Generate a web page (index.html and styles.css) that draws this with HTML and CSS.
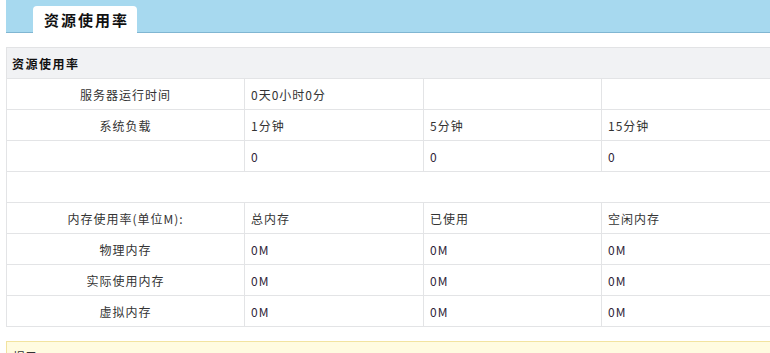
FILE: index.html
```html
<!DOCTYPE html>
<html>
<head>
<meta charset="utf-8">
<link rel="stylesheet" href="styles.css">
</head>
<body>
<div class="page">
  <div class="topbar">
    <div class="tab">资源使用率</div>
  </div>
  <div class="panel">
    <div class="panel-head">资源使用率</div>
    <table class="grid">
      <colgroup>
        <col class="c1"><col class="c2"><col class="c3"><col class="c4">
      </colgroup>
      <tr><td class="label">服务器运行时间</td><td>0天0小时0分</td><td></td><td></td></tr>
      <tr><td class="label">系统负载</td><td>1分钟</td><td>5分钟</td><td>15分钟</td></tr>
      <tr><td class="label"></td><td class="num">0</td><td class="num">0</td><td class="num">0</td></tr>
      <tr><td colspan="4"></td></tr>
      <tr><td class="label">内存使用率(单位M):</td><td>总内存</td><td>已使用</td><td>空闲内存</td></tr>
      <tr><td class="label">物理内存</td><td class="num">0M</td><td class="num">0M</td><td class="num">0M</td></tr>
      <tr><td class="label">实际使用内存</td><td class="num">0M</td><td class="num">0M</td><td class="num">0M</td></tr>
      <tr><td class="label">虚拟内存</td><td class="num">0M</td><td class="num">0M</td><td class="num">0M</td></tr>
    </table>
  </div>
  <div class="notice">提示：</div>
</div>
</body>
</html>
```
FILE: styles.css
```css
html, body {
  margin: 0;
  padding: 0;
  overflow: hidden;
  background: #ffffff;
}
.page {
  width: 770px;
  height: 353px;
  overflow: hidden;
  padding-left: 6px;
  box-sizing: border-box;
  font-family: "Noto Sans CJK SC", "DejaVu Sans", sans-serif;
  font-size: 12px;
  color: #333333;
}
.topbar {
  height: 32px;
  background: #a7d9ef;
  border-bottom: 1px solid #80b6d2;
  display: flex;
  align-items: flex-end;
  padding-left: 27px;
  margin-right: -10px;
}
.tab {
  width: 104px;
  height: 27px;
  margin-bottom: -1px;
  background: #ffffff;
  border-radius: 4px 4px 0 0;
  box-sizing: border-box;
  padding-left: 11px;
  font-size: 15px;
  font-weight: bold;
  color: #111111;
  line-height: 28px;
  letter-spacing: 2px;
}
.panel {
  margin-top: 14px;
  width: 790px;
}
.panel-head {
  height: 30px;
  background: #f1f2f4;
  border-top: 1px solid #e2e3e5;
  border-left: 1px solid #e2e3e5;
  line-height: 31px;
  padding-left: 5px;
  font-weight: bold;
  color: #111111;
  font-size: 12px;
  letter-spacing: 1.5px;
}
.grid {
  border-collapse: collapse;
  width: 790px;
  table-layout: fixed;
}
.c1 { width: 238px; }
.c2 { width: 179px; }
.c3 { width: 178px; }
.grid td {
  height: 30px;
  border: 1px solid #e3e4e6;
  padding: 0 0 0 6px;
  color: #333333;
  vertical-align: middle;
  letter-spacing: 1px;
}
.grid td.label {
  text-align: center;
  padding-left: 0;
}
.grid td.num {
  color: #2e2438;
  letter-spacing: 1px;
}
.notice {
  margin-top: 14px;
  width: 790px;
  background: #fffbe0;
  border: 1px solid #f2e3a0;
  padding: 6px;
  height: 30px;
  box-sizing: border-box;
}
```
